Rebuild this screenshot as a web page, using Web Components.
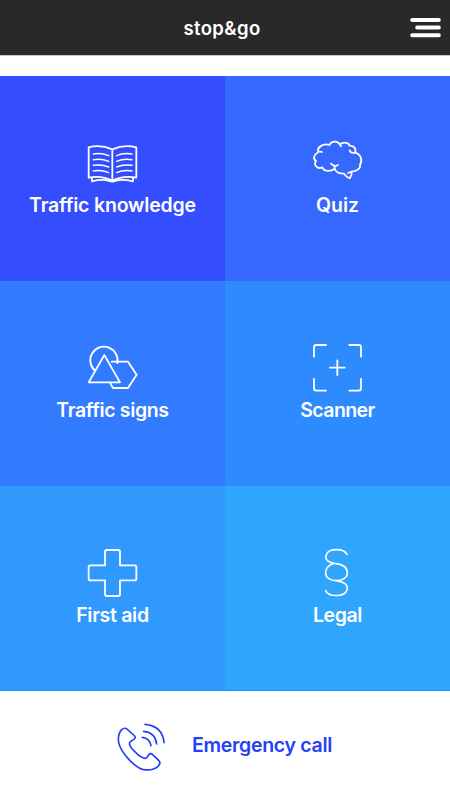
<!DOCTYPE html>
<html lang="en"><head><meta charset="utf-8"><title>stop&amp;go</title>
<style>html,body{margin:0;height:100%;background:#fff}body{font-family:Inter,"Liberation Sans",sans-serif}</style></head>
<body>
<go-app></go-app>
<script>
const define=(name,html)=>customElements.define(name,class extends HTMLElement{
  connectedCallback(){
    if(this.shadowRoot)return;
    const t=document.createElement('template');t.innerHTML=html;
    this.attachShadow({mode:'open'}).append(t.content.cloneNode(true));
  }
});

define('go-header',`<style>
:host{display:grid;grid-template-columns:1fr auto 1fr;align-items:center;height:56px;box-sizing:border-box;background:#292929;background-clip:padding-box;color:#fff;padding:0 9px;border-bottom:1px solid #c8c8c8}
h1{grid-column:2;margin:0 6px 0 0;font-size:18.5px;font-weight:600;line-height:24px;letter-spacing:.38px;padding-top:1px}
svg{justify-self:end;display:block}
</style><h1><slot></slot></h1>
<svg width="32" height="22" viewBox="0 0 32 22" fill="none" stroke="#fff" stroke-width="4" stroke-linecap="round"><path d="M3.2 3.1H29.8M8.2 10.5H29.8M3.2 18.2H29.8"/></svg>`);

define('go-tile',`<style>
:host{display:flex;flex-direction:column;align-items:center;box-sizing:border-box;height:205px;padding-top:60px;background:var(--tile);color:#fff;min-width:0}
.label{font-size:19.5px;font-weight:600;line-height:24px;margin-top:3px;letter-spacing:var(--track,0);white-space:nowrap}
::slotted(svg){display:block;width:56px;height:54px;fill:none;stroke:#fff;stroke-width:5.4;stroke-linecap:round;stroke-linejoin:round}
</style><slot name="icon"></slot><div class="label"><slot></slot></div>`);

define('go-call',`<style>
:host{display:flex;align-items:center;box-sizing:border-box;height:109px;padding-left:112px;color:#2540f5}
svg{display:block;flex:none;width:60px;height:56px}
span{font-size:19.5px;font-weight:600;line-height:24px;letter-spacing:-.29px;margin:0 0 1px 20px;white-space:nowrap}
</style><svg viewBox="21 114 180 168" fill="none" stroke="#2540f5" stroke-width="5" stroke-linecap="round" stroke-linejoin="round"><path d="M67 148Q59 141 50 149Q37 164 41 187C46 215 88 262 113 268Q142 274 159 259Q169 250 161 241L143 224Q136 217 130 226Q124 238 116 234C101 229 78 205 74 194Q71 187 80 182Q95 175 89 168ZM120 133Q173 138 177 188M116 154Q151 157 155 192M112 172Q134 175 138 197"/></svg><span><slot></slot></span>`);

define('go-app',`<style>
:host{display:block;width:100%}
main{display:grid;grid-template-columns:1fr 1fr;margin-top:20px}
go-tile:nth-child(n+5){box-shadow:inset 0 -1px #1f94f8}
</style>
<go-header>stop&amp;go</go-header>
<main>
<go-tile style="--tile:#344dfe;--track:-.18px"><svg slot="icon" viewBox="195 3 168 162"><path d="M277 43Q240 27 206 37V128Q245 121 277 137Q309 121 349 128V37Q313 27 277 43V137M216 128V139Q247 131 268 138Q277 142 286 138Q307 131 339 139V128"/><path stroke-width="4.5" d="M220 57Q245 53 266 62M220 74Q245 70 266 79M220 91Q245 87 266 96M220 108Q245 104 266 113M336 57Q310 53 290 62M336 74Q310 70 290 79M336 91Q310 87 290 96M336 108Q310 104 290 113"/></svg>Traffic knowledge</go-tile>
<go-tile style="--tile:#3568fe"><svg slot="icon" viewBox="30 18 168 162"><path d="M66 66Q55 63 52 68C39 76 40 89 48 92C39 107 54 118 67 112C74 129 96 122 104 116Q109 131 132 131Q140 142 149 145Q157 135 155 125C170 124 183 115 180 104C187 94 185 73 165 68C171 52 155 46 148 47C149 38 129 34 120 44C113 30 94 33 88 45C71 38 50 52 55 66M120 44L123 49M165 68Q152 71 149 61M93 101L104 109L114 105M104 109V116M155 125L144 129"/></svg>Quiz</go-tile>
<go-tile style="--tile:#337bfe;--track:-.36px"><svg slot="icon" viewBox="135 18 168 162"><path d="M165 107A41 41 0 1 1 232 84M193 60L240 142H146ZM215 80H264L290 119L264 159H219L211 145"/></svg>Traffic signs</go-tile>
<go-tile style="--tile:#2e8bfe;--track:-.58px"><svg slot="icon" viewBox="60 18 168 162"><path d="M72 65V37Q72 30 79 30H108M178 30H206Q213 30 213 37V65M213 132V160Q213 167 206 167H178M108 167H79Q72 167 72 160V132M142 76V120M120 98H164"/></svg>Scanner</go-tile>
<go-tile style="--tile:#2f99fe;--track:-.3px"><svg slot="icon" viewBox="75 18 168 162"><path d="M140 30H175Q180 30 180 35V76H224Q229 76 229 81V116Q229 121 224 121H180V163Q180 168 175 168H140Q135 168 135 163V121H91Q86 121 86 116V81Q86 76 91 76H135V35Q135 30 140 30Z"/></svg>First aid</go-tile>
<go-tile style="--tile:#2fa5fe;--track:-.4px"><svg slot="icon" viewBox="30 18 168 162"><path stroke-width="4.8" d="M141 43C132 25 86 23 79 44C73 60 86 67 103 70C89 74 77 81 77 98C77 114 92 122 108 122C126 122 142 114 142 98C142 80 126 72 103 70M108 122C128 124 146 132 141 149C135 171 86 173 77 152"/></svg>Legal</go-tile>
</main>
<go-call>Emergency call</go-call>`);
</script></body></html>
